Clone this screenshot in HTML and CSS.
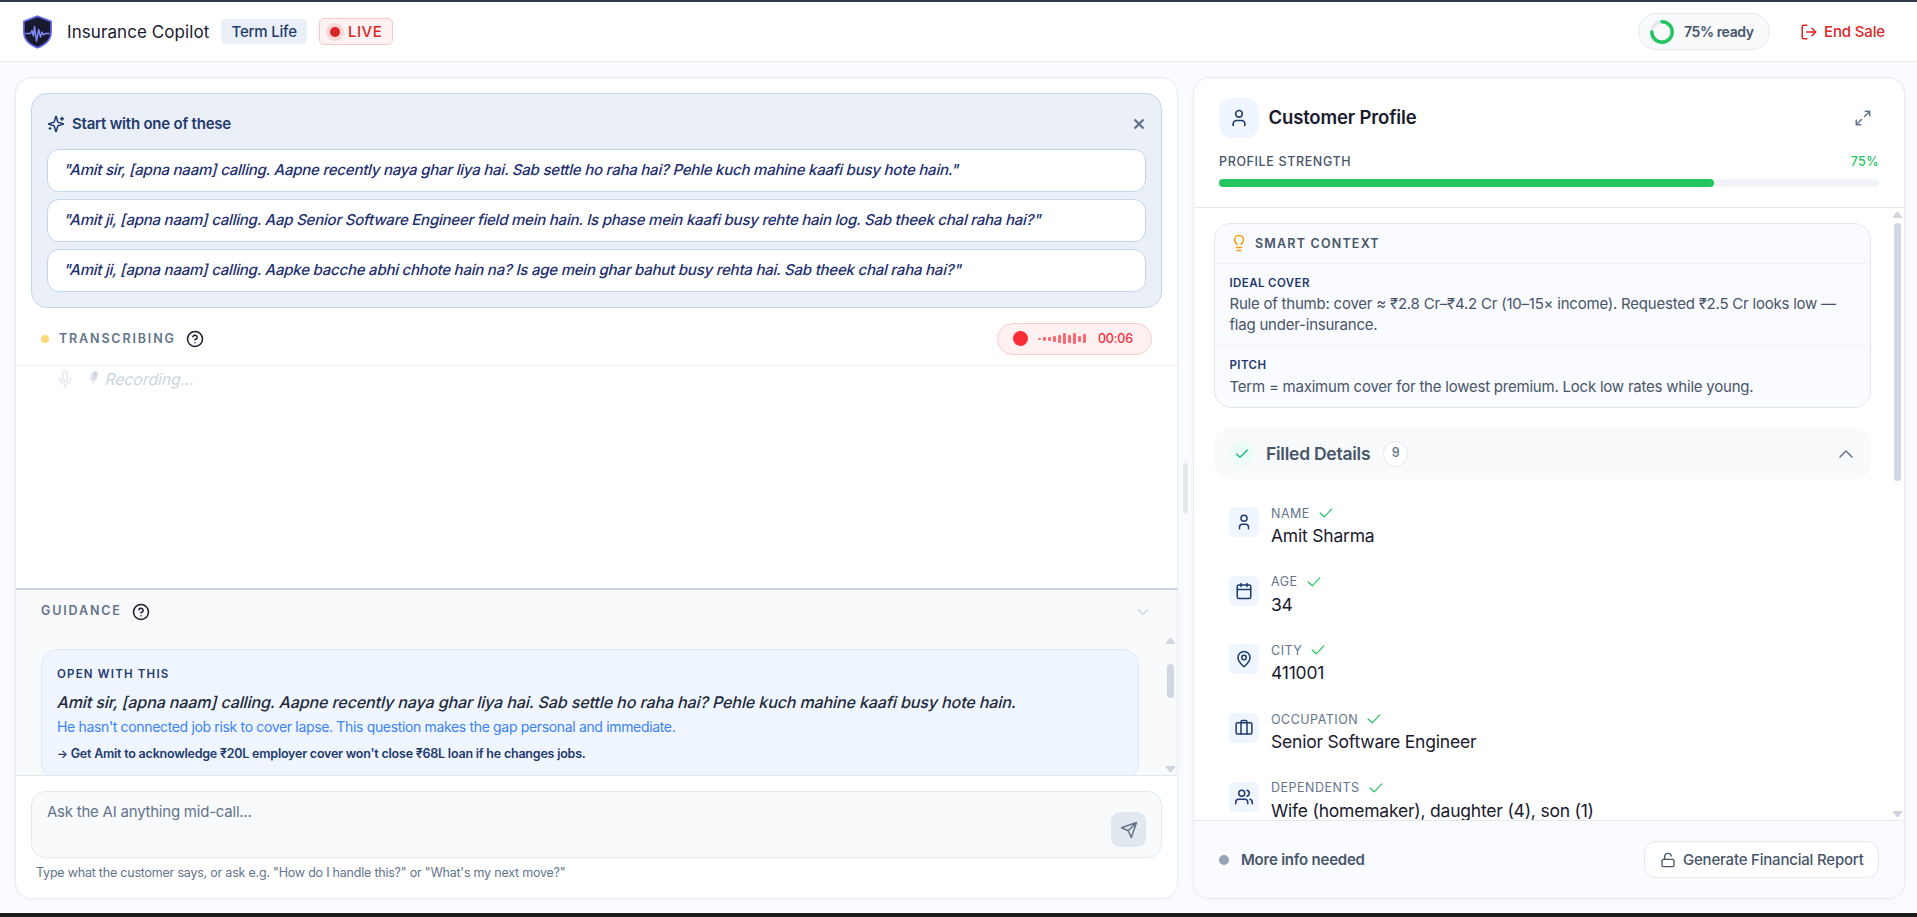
FILE: index.html
```html
<!DOCTYPE html>
<html lang="en">

<head>
    <meta charset="UTF-8">
    <meta name="viewport" content="width=device-width, initial-scale=1.0">
    <title>Insurance Copilot</title>
    <link rel="stylesheet" href="styles.css">
</head>

<body>

    <header class="topbar">
        <svg class="logo" viewBox="0 0 30 34">
            <path d="M15 1.2 L28.6 6.4 V17 C28.6 25 22.5 30 15 32.8 C7.5 30 1.4 25 1.4 17 V6.4 Z" fill="#1a1a2e" stroke="#6366f1" stroke-width="1.6"/>
            <path d="M3 18.5 H8 L9.5 15.5 L11 21 L12 11.5 L14 26 L16.2 14.5 L18 22 L19.5 17 L21 20 L22.5 18.5 H27" fill="none" stroke="#818cf8" stroke-width="1.4" stroke-linejoin="round"/>
        </svg>
        <span class="brand">Insurance Copilot</span>
        <span class="tag">Term Life</span>
        <span class="live"><i class="live-dot"></i>LIVE</span>
        <div class="ready">
            <svg width="24" height="24" viewBox="0 0 24 24" fill="none" stroke-width="3.4">
                <circle cx="12" cy="12" r="10.2" stroke="#e2e8f0"/>
                <path d="M12 1.8 A10.2 10.2 0 1 1 1.8 12" stroke="#22c55e" stroke-linecap="round"/>
            </svg>
            <span>75% ready</span>
        </div>
        <button class="end-sale">
            <svg class="icon" width="18" height="18" viewBox="0 0 24 24"><path d="M9 21H5a2 2 0 0 1-2-2V5a2 2 0 0 1 2-2h4M16 17l5-5-5-5M21 12H9"/></svg>
            <span>End Sale</span>
        </button>
    </header>

    <main class="layout">
        <section class="panel call">
            <div class="starters">
                <div class="starters-head">
                    <svg class="icon" width="18" height="18" viewBox="0 0 24 24"><path d="M9.94 15.5A2 2 0 0 0 8.5 14.06l-6.13-1.58a.5.5 0 0 1 0-.96L8.5 9.94A2 2 0 0 0 9.94 8.5l1.58-6.13a.5.5 0 0 1 .96 0L14.06 8.5A2 2 0 0 0 15.5 9.94l6.13 1.58a.5.5 0 0 1 0 .96L15.5 14.06a2 2 0 0 0-1.44 1.44l-1.58 6.13a.5.5 0 0 1-.96 0zM20 3v4M22 5h-4M4 17v2M5 18H3"/></svg>
                    <h2>Start with one of these</h2>
                    <svg class="close" width="12" height="12" viewBox="0 0 12 12"><path d="M1.500 1.500l9 9M10.500 1.500l-9 9"/></svg>
                </div>
                <p class="starter"><span class="slant">"Amit sir, [apna naam] calling. Aapne recently naya ghar liya hai. Sab settle ho raha hai? Pehle kuch mahine kaafi busy hote hain."</span></p>
                <p class="starter"><span class="slant">"Amit ji, [apna naam] calling. Aap Senior Software Engineer field mein hain. Is phase mein kaafi busy rehte hain log. Sab theek chal raha hai?"</span></p>
                <p class="starter"><span class="slant">"Amit ji, [apna naam] calling. Aapke bacche abhi chhote hain na? Is age mein ghar bahut busy rehta hai. Sab theek chal raha hai?"</span></p>
            </div>

            <div class="transcript-head">
                <i class="status-dot"></i>
                <span class="section-label">TRANSCRIBING</span>
                <svg class="icon help" width="18" height="18" viewBox="0 0 24 24"><circle cx="12" cy="12" r="10"/><path d="M9.09 9a3 3 0 0 1 5.83 1c0 2-3 3-3 3M12 17h.01"/></svg>
                <div class="recorder">
                    <i class="rec-dot"></i>
                    <div class="wave">
                        <i style="height: 2px"></i><i style="height: 4px"></i><i style="height: 4px"></i><i style="height: 6px"></i><i style="height: 8px"></i><i style="height: 11px"></i><i style="height: 8px"></i><i style="height: 11px"></i><i style="height: 6px"></i><i style="height: 9px"></i>
                    </div>
                    <span>00:06</span>
                </div>
            </div>

            <div class="transcript">
                <svg class="icon" width="18" height="18" viewBox="0 0 24 24"><path d="M12 1.500a3 3 0 0 0-3 3V12a3 3 0 0 0 6 0V4.500a3 3 0 0 0-3-3zM19 10v2a7 7 0 0 1-14 0v-2M12 19v3.500"/></svg>
                <svg class="mic" width="9" height="13" viewBox="0 0 9 13"><path d="M3.500 0.500h4l-1.200 7h-4z" fill="#cfd6e0"/><path d="M1.700 2.500l-.9 6h4.700l2.200-5M3.800 8.500L3 12.500" fill="none" stroke="#dcdde4" stroke-width="1.300"/></svg>
                <span class="slant">Recording...</span>
            </div>

            <div class="guidance">
                <div class="guidance-head">
                    <span class="section-label">GUIDANCE</span>
                    <svg class="icon help" width="18" height="18" viewBox="0 0 24 24"><circle cx="12" cy="12" r="10"/><path d="M9.09 9a3 3 0 0 1 5.83 1c0 2-3 3-3 3M12 17h.01"/></svg>
                    <svg class="icon fold" width="16" height="16" viewBox="0 0 24 24"><path d="M5 8.500l7 7 7-7"/></svg>
                </div>
                <div class="guidance-scroll">
                    <article class="hint">
                        <h3>OPEN WITH THIS</h3>
                        <p class="hint-line"><span class="slant">Amit sir, [apna naam] calling. Aapne recently naya ghar liya hai. Sab settle ho raha hai? Pehle kuch mahine kaafi busy hote hain.</span></p>
                        <p class="hint-why">He hasn't connected job risk to cover lapse. This question makes the gap personal and immediate.</p>
                        <p class="hint-goal"><span class="to">→</span> Get Amit to acknowledge ₹20L employer cover won't close ₹68L loan if he changes jobs.</p>
                    </article>
                    <div class="scrollbar">
                        <i class="arrow up"></i><i class="thumb"></i><i class="arrow down"></i>
                    </div>
                </div>
            </div>

            <div class="composer">
                <div class="input">
                    <span>Ask the AI anything mid-call...</span>
                    <button class="send"><svg class="icon" width="18" height="18" viewBox="0 0 24 24"><path d="M22 2L15 22l-4-9-9-4zM22 2L11 13"/></svg></button>
                </div>
                <p class="note">Type what the customer says, or ask e.g. "How do I handle this?" or "What's my next move?"</p>
            </div>
        </section>

        <div class="gutter"><i></i></div>

        <aside class="panel profile">
            <div class="profile-head">
                <div class="profile-title">
                    <span class="avatar"><svg class="icon" width="20" height="20" viewBox="0 0 24 24"><circle cx="12" cy="7" r="4"/><path d="M19 21v-2a4 4 0 0 0-4-4H9a4 4 0 0 0-4 4v2"/></svg></span>
                    <h1>Customer Profile</h1>
                    <svg class="icon expand" width="18" height="18" viewBox="0 0 24 24"><path d="M15 3h6v6M9 21H3v-6M21 3l-7 7M3 21l7-7"/></svg>
                </div>
                <div class="strength"><span>PROFILE STRENGTH</span><b>75%</b></div>
                <div class="meter"><i style="width: 75%"></i></div>
            </div>

            <div class="profile-scroll">
                <div class="profile-content">
                    <div class="context">
                        <div class="context-head">
                            <svg class="icon" width="18" height="18" viewBox="0 0 24 24"><path d="M15 14c.2-1 .7-1.700 1.500-2.500 1-.9 1.500-2.200 1.500-3.500A6 6 0 0 0 6 8c0 1 .2 2.200 1.500 3.500.7.7 1.300 1.500 1.500 2.500M8.500 18h7M9.500 22h5"/></svg>
                            <span>SMART CONTEXT</span>
                        </div>
                        <div class="context-row">
                            <h3>IDEAL COVER</h3>
                            <p>Rule of thumb: cover ≈ ₹2.8 Cr–₹4.2 Cr (10–15× income). Requested ₹2.5 Cr looks low —<br>flag under-insurance.</p>
                        </div>
                        <div class="context-row pitch">
                            <h3>PITCH</h3>
                            <p>Term = maximum cover for the lowest premium. Lock low rates while young.</p>
                        </div>
                    </div>

                    <div class="filled">
                        <span class="ok"><svg class="icon" width="16" height="16" viewBox="0 0 24 24"><path d="M20 6L9 17l-5-5"/></svg></span>
                        <h2>Filled Details</h2>
                        <span class="count">9</span>
                        <svg class="icon fold" width="18" height="18" viewBox="0 0 24 24"><path d="M4 16l8-8 8 8"/></svg>
                    </div>

                    <ul class="details">
                        <li>
                            <span class="tile"><svg class="icon" width="18" height="18" viewBox="0 0 24 24"><circle cx="12" cy="7" r="4"/><path d="M18 21v-2a4 4 0 0 0-4-4h-4a4 4 0 0 0-4 4v2"/></svg></span>
                            <div><span class="key">NAME<svg class="icon tick" width="14" height="14" viewBox="0 0 24 24"><path d="M22 5L9 18.500l-7-6.500"/></svg></span><span class="value">Amit Sharma</span></div>
                        </li>
                        <li>
                            <span class="tile"><svg class="icon" width="18" height="18" viewBox="0 0 24 24"><rect x="3" y="4" width="18" height="18" rx="2"/><path d="M8 2v4M16 2v4M3 10h18"/></svg></span>
                            <div><span class="key">AGE<svg class="icon tick" width="14" height="14" viewBox="0 0 24 24"><path d="M22 5L9 18.500l-7-6.500"/></svg></span><span class="value">34</span></div>
                        </li>
                        <li>
                            <span class="tile"><svg class="icon" width="18" height="18" viewBox="0 0 24 24"><path d="M20 10c0 5-5.500 10.200-7.400 11.800a1 1 0 0 1-1.200 0C9.500 20.200 4 15 4 10a8 8 0 0 1 16 0z"/><circle cx="12" cy="10" r="3"/></svg></span>
                            <div><span class="key">CITY<svg class="icon tick" width="14" height="14" viewBox="0 0 24 24"><path d="M22 5L9 18.500l-7-6.500"/></svg></span><span class="value">411001</span></div>
                        </li>
                        <li>
                            <span class="tile"><svg class="icon" width="18" height="18" viewBox="0 0 24 24"><rect x="1.500" y="5" width="21" height="15" rx="2"/><path d="M16 20V4a2 2 0 0 0-2-2h-4a2 2 0 0 0-2 2v16"/></svg></span>
                            <div><span class="key">OCCUPATION<svg class="icon tick" width="14" height="14" viewBox="0 0 24 24"><path d="M22 5L9 18.500l-7-6.500"/></svg></span><span class="value">Senior Software Engineer</span></div>
                        </li>
                        <li>
                            <span class="tile"><svg class="icon" width="18" height="18" viewBox="0 0 24 24"><path d="M17 21v-2a4 4 0 0 0-4-4H5a4 4 0 0 0-4 4v2M23 21v-2a4 4 0 0 0-3-3.870M16 3.130a4 4 0 0 1 0 7.750"/><circle cx="9" cy="7" r="4"/></svg></span>
                            <div><span class="key">DEPENDENTS<svg class="icon tick" width="14" height="14" viewBox="0 0 24 24"><path d="M22 5L9 18.500l-7-6.500"/></svg></span><span class="value">Wife (homemaker), daughter (4), son (1)</span></div>
                        </li>
                    </ul>
                </div>
                <div class="scrollbar">
                    <i class="arrow up"></i><i class="thumb"></i><i class="arrow down"></i>
                </div>
            </div>

            <div class="profile-foot">
                <i class="foot-dot"></i>
                <span class="foot-text">More info needed</span>
                <button class="report">
                    <svg class="icon" width="16" height="16" viewBox="0 0 24 24"><rect x="3" y="11" width="18" height="11" rx="2"/><path d="M7 11V7a5 5 0 0 1 9.900-1"/></svg>
                    <span>Generate Financial Report</span>
                </button>
            </div>
        </aside>
    </main>

</body>

</html>
```
FILE: styles.css
```css
* {
    box-sizing: border-box;
    margin: 0;
    padding: 0;
}

body {
    height: 917px;
    display: flex;
    flex-direction: column;
    overflow: hidden;
    font-family: Inter, sans-serif;
    color: #1a1a2e;
    background: #fafbff;
    border-top: 2px solid #333b4a;
    border-bottom: 4px solid #1b1b1d;
}

button {
    font: inherit;
    letter-spacing: inherit;
    background: none;
    border: none;
}

span, h1, h2, h3 {
    white-space: nowrap;
}

i {
    display: block;
    flex: none;
}

svg {
    display: block;
    flex: none;
}

.icon {
    fill: none;
    stroke: currentColor;
    stroke-width: 2;
    stroke-linecap: round;
    stroke-linejoin: round;
}

/* slanted roman, keeps the upright letter shapes */
.slant {
    display: inline-block;
    transform: skewX(-14deg);
    transform-origin: 0 65%;
}

/* top bar */
.topbar {
    height: 60px;
    flex: none;
    display: flex;
    align-items: center;
    padding: 0 32px 0 22px;
    background: #fff;
    border-bottom: 1px solid #e6eaf1;
}

.logo {
    width: 31px;
    height: 34px;
}

.brand {
    width: 142px;
    margin-left: 14px;
    font-size: 17px;
    letter-spacing: 0.08px;
}

.tag {
    margin-left: 12px;
    width: 86px;
    height: 25px;
    line-height: 25px;
    padding-left: 10.5px;
    border-radius: 5px;
    font-size: 15px;
    font-weight: 500;
    letter-spacing: -0.2px;
    color: #1e3a6e;
    background: #ebf0f8;
}

.live {
    display: flex;
    align-items: center;
    gap: 8px;
    margin-left: 12px;
    width: 74px;
    height: 27px;
    padding-left: 10px;
    border: 1px solid #fbc6c6;
    border-radius: 5px;
    font-size: 15px;
    font-weight: 500;
    letter-spacing: 0.5px;
    color: #dc2626;
    background: #fef2f2;
}

.live-dot {
    width: 10px;
    height: 10px;
    border-radius: 50%;
    background: #dc2626;
    box-shadow: 0 0 0 4px #fbd9d9;
}

.ready {
    margin-left: auto;
    display: flex;
    align-items: center;
    gap: 10px;
    width: 132px;
    height: 37px;
    padding-left: 11px;
    border: 1px solid #e2e8f0;
    border-radius: 19px;
    font-size: 14px;
    font-weight: 600;
    letter-spacing: -0.4px;
    color: #475569;
    background: #f8fafc;
}

.end-sale {
    display: flex;
    align-items: center;
    gap: 6px;
    margin-left: 30px;
    font-size: 15px;
    font-weight: 500;
    letter-spacing: -0.15px;
    color: #dc2626;
}

/* page columns */
.layout {
    flex: 1;
    display: flex;
    padding: 15px 12px 14px 15px;
}

.panel {
    height: 822px;
    display: flex;
    flex-direction: column;
    overflow: hidden;
    background: #fff;
    border: 1px solid #e6eaf1;
    border-radius: 17px;
    box-shadow: 0 1px 4px rgba(30, 41, 99, 0.03);
}

.call {
    width: 1163px;
}

.gutter {
    width: 15px;
    display: flex;
    align-items: center;
    justify-content: center;
}

.gutter i {
    width: 5px;
    height: 50px;
    border-radius: 3px;
    background: #e2e8f0;
}

.profile {
    width: 712px;
}

/* opening lines */
.starters {
    height: 215px;
    margin: 15px 15px 0;
    padding: 0 15px;
    background: #ebf0f8;
    border: 1px solid #c3d5e9;
    border-radius: 16px;
}

.starters-head {
    height: 55px;
    padding-top: 5px;
    display: flex;
    align-items: center;
    gap: 7px;
    color: #1e3a6e;
}

.starters-head h2 {
    padding-bottom: 1px;
    font-size: 15px;
    font-weight: 600;
    letter-spacing: -0.22px;
}

.close {
    margin: 0 1px 0 auto;
    stroke: #64748b;
    stroke-width: 2.4;
}

.starter {
    height: 43px;
    line-height: 40px;
    margin-bottom: 7px;
    padding: 0 15px;
    font-size: 15px;
    font-weight: 500;
    letter-spacing: -0.22px;
    white-space: nowrap;
    color: #1e2f70;
    background: #fff;
    border: 1px solid #c3d5e9;
    border-radius: 12px;
}

/* transcript */
.section-label {
    font-size: 12.5px;
    font-weight: 600;
    letter-spacing: 1.85px;
    color: #64748b;
}

.help {
    color: #1a1a2e;
}

.transcript-head {
    height: 58px;
    flex: none;
    display: flex;
    align-items: center;
    padding: 4px 25px 0;
    border-bottom: 1px solid #f1f3f6;
}

.status-dot {
    width: 8px;
    height: 8px;
    margin-right: 10px;
    border-radius: 50%;
    background: #fdd87a;
}

.transcript-head .help {
    margin-left: 10px;
}

.recorder {
    margin-left: auto;
    display: flex;
    align-items: center;
    width: 155px;
    height: 32px;
    padding-left: 15px;
    border: 1px solid #fcc9cc;
    border-radius: 16px;
    background: #fff1f2;
    font-size: 12.5px;
    font-weight: 500;
    letter-spacing: -0.2px;
    color: #fb2c36;
}

.rec-dot {
    width: 15px;
    height: 15px;
    border-radius: 50%;
    background: #fb2c36;
}

.wave {
    display: flex;
    align-items: center;
    gap: 2px;
    margin: 0 12px 0 10px;
}

.wave i {
    width: 3px;
    border-radius: 1px;
    background: #fd6b72;
}

.transcript {
    height: 222px;
    flex: none;
    display: flex;
    align-items: flex-start;
    padding: 4px 0 0 40px;
    color: #e2e6ec;
}

.mic {
    margin: 1px 6px 0 16px;
}

.transcript span {
    margin-top: 1px;
    line-height: 17px;
    font-size: 16px;
    letter-spacing: -0.15px;
    color: #ccd5e1;
}

/* guidance */
.guidance {
    height: 187px;
    flex: none;
    background: #f9fafc;
    border-top: 2px solid #cbd5e1;
}

.guidance-head {
    height: 44px;
    display: flex;
    align-items: center;
    padding: 0 26px 0 25px;
}

.guidance-head .section-label {
    padding-bottom: 3px;
}

.guidance-head .help {
    margin-left: 10px;
}

.guidance-head .fold {
    margin-left: auto;
    color: #cbd5e1;
}

.guidance-scroll {
    height: 141px;
    display: flex;
    overflow: hidden;
    padding-left: 25px;
}

.hint {
    width: 1098px;
    height: 130px;
    margin-top: 15px;
    padding: 16px 15px;
    border: 1px solid #dbe8fb;
    border-radius: 16px;
    background: #eff6ff;
}

.hint p {
    white-space: nowrap;
}

.hint h3 {
    line-height: 16px;
    font-size: 11.5px;
    font-weight: 600;
    letter-spacing: 1.2px;
    color: #1e3a6e;
}

.hint-line {
    margin-top: 7px;
    line-height: 26px;
    font-size: 16px;
    font-weight: 500;
    letter-spacing: -0.1px;
    color: #1e293b;
}

.hint-why {
    margin-top: 1px;
    line-height: 22px;
    font-size: 14px;
    letter-spacing: -0.34px;
    color: #3b82f6;
}

.hint-goal {
    margin-top: 6px;
    line-height: 20px;
    font-size: 12.5px;
    font-weight: 600;
    letter-spacing: -0.22px;
    color: #1e3a6e;
}

.to {
    font-size: 11.5px;
}

.scrollbar {
    display: flex;
    flex-direction: column;
    align-items: center;
    width: 9px;
}

.arrow {
    width: 9px;
    height: 6px;
    background: #d0d6e0;
    clip-path: polygon(40% 0, 60% 0, 100% 80%, 100% 100%, 0 100%, 0 80%);
}

.arrow.down {
    margin-top: auto;
    clip-path: polygon(0 0, 100% 0, 100% 20%, 60% 100%, 40% 100%, 0 20%);
}

.thumb {
    width: 7px;
    border-radius: 4px;
    background: #d0d7e2;
}

.guidance-scroll .scrollbar {
    margin-left: 27px;
    padding: 4px 0 3px;
}

.guidance-scroll .thumb {
    height: 34px;
    margin-top: 20px;
}

/* question box */
.composer {
    flex: 1;
    padding: 15px 15px 0;
    border-top: 1px solid #e2e8f0;
    background: #fff;
}

.input {
    height: 67px;
    display: flex;
    justify-content: space-between;
    padding: 10px 15px;
    border: 1px solid #e2e8f0;
    border-radius: 14px;
    background: #f8fafc;
    font-size: 15px;
    line-height: 20px;
    letter-spacing: -0.23px;
    color: #64748b;
}

.send {
    align-self: flex-end;
    display: flex;
    align-items: center;
    justify-content: center;
    width: 35px;
    height: 35px;
    border-radius: 9px;
    background: #e2e8f0;
    color: #64748b;
}

.note {
    margin: 5px 0 0 5px;
    line-height: 20px;
    font-size: 12.5px;
    letter-spacing: -0.215px;
    color: #64748b;
}

/* customer profile */
.profile-head {
    height: 130px;
    flex: none;
    padding: 20px 25px 0;
    border-bottom: 1px solid #e2e8f0;
}

.profile-title {
    display: flex;
    align-items: center;
}

.avatar {
    display: flex;
    align-items: center;
    justify-content: center;
    width: 40px;
    height: 40px;
    border-radius: 12px;
    background: #eff6ff;
    color: #1e3a6e;
}

.profile-title h1 {
    margin-left: 9.5px;
    padding-bottom: 2px;
    font-size: 18.5px;
    font-weight: 600;
    letter-spacing: -0.15px;
}

.expand {
    margin: 0 7px 0 auto;
    color: #64748b;
}

.strength {
    display: flex;
    justify-content: space-between;
    margin-top: 14px;
    line-height: 20px;
    font-size: 12.5px;
    font-weight: 500;
    letter-spacing: 0.63px;
    color: #475569;
}

.strength b {
    font-weight: 500;
    letter-spacing: 0.4px;
    color: #22c55e;
}

.meter {
    height: 8px;
    margin-top: 7px;
    border-radius: 4px;
    background: #f1f5f9;
}

.meter i {
    height: 8px;
    border-radius: 4px;
    background: #22c55e;
}

.profile-scroll {
    height: 612px;
    flex: none;
    display: flex;
    overflow: hidden;
}

.profile-content {
    width: 677px;
    padding: 15px 0 0 20px;
}

.context {
    height: 185px;
    border: 1px solid #e2e8f0;
    border-radius: 17px;
    background: #fafbff;
}

.context-head {
    height: 39px;
    display: flex;
    align-items: center;
    gap: 7px;
    padding: 0 15px 1px;
    font-size: 12.5px;
    font-weight: 600;
    letter-spacing: 1.2px;
    color: #475569;
}

.context-head svg {
    color: #f59e0b;
}

.context-row {
    padding: 10px 15px 0 14.5px;
    height: 82px;
    border-top: 1px solid #f0f3f8;
}

.context-row h3 {
    line-height: 18px;
    margin-bottom: 0.5px;
    font-size: 11.5px;
    font-weight: 600;
    letter-spacing: 0.4px;
    color: #1e3a6e;
}

.context-row p {
    line-height: 21px;
    font-size: 15px;
    letter-spacing: -0.22px;
    white-space: nowrap;
    color: #475569;
}

.pitch h3 {
    margin-bottom: 1.5px;
}

.filled {
    display: flex;
    align-items: center;
    height: 51px;
    margin-top: 20px;
    padding: 0 16px 0 15px;
    border-radius: 16px;
    background: #f8fafc;
}

.ok {
    display: flex;
    align-items: center;
    justify-content: center;
    width: 25px;
    height: 25px;
    border-radius: 50%;
    background: #ecfdf5;
    color: #10b981;
}

.filled h2 {
    margin-left: 12px;
    font-size: 17.5px;
    font-weight: 600;
    letter-spacing: -0.25px;
    color: #475569;
}

.count {
    width: 25px;
    height: 26px;
    line-height: 22px;
    margin-left: 13px;
    border: 1px solid #e2e8f0;
    border-radius: 13px;
    background: #fff;
    font-size: 12.5px;
    font-weight: 500;
    text-align: center;
    color: #64748b;
}

.filled .fold {
    margin-left: auto;
    color: #64748b;
}

.details {
    list-style: none;
    padding: 24px 15px 0;
}

.details li {
    height: 68.7px;
    display: flex;
    gap: 12px;
}

.tile {
    display: flex;
    align-items: center;
    justify-content: center;
    width: 30px;
    height: 30px;
    margin-top: 4px;
    border-radius: 6px;
    background: #eff6ff;
    color: #1e3a6e;
}

.key {
    display: flex;
    align-items: center;
    gap: 9px;
    height: 20px;
    font-size: 12.5px;
    letter-spacing: 0.5px;
    color: #64748b;
}

.tick {
    color: #22c55e;
}

.value {
    display: block;
    line-height: 26px;
    font-size: 17.5px;
    letter-spacing: -0.21px;
}

.profile-scroll .scrollbar {
    margin-left: 22px;
    padding: 4px 0 3px;
}

.profile-scroll .thumb {
    height: 258px;
    margin-top: 5px;
}

.profile-foot {
    flex: 1;
    display: flex;
    align-items: center;
    padding: 0 25px;
    border-top: 1px solid #e2e8f0;
    background: #fafbff;
}

.foot-dot {
    width: 10px;
    height: 10px;
    border-radius: 50%;
    background: #94a3b8;
}

.foot-text {
    margin-left: 12px;
    font-size: 15px;
    font-weight: 600;
    letter-spacing: -0.22px;
    color: #475569;
}

.report {
    margin-left: auto;
    display: flex;
    align-items: center;
    gap: 7px;
    width: 235px;
    height: 37px;
    padding-left: 15px;
    border: 1px solid #e2e8f0;
    border-radius: 12px;
    background: #fff;
    font-size: 15px;
    font-weight: 500;
    letter-spacing: -0.2px;
    color: #475569;
}
```
